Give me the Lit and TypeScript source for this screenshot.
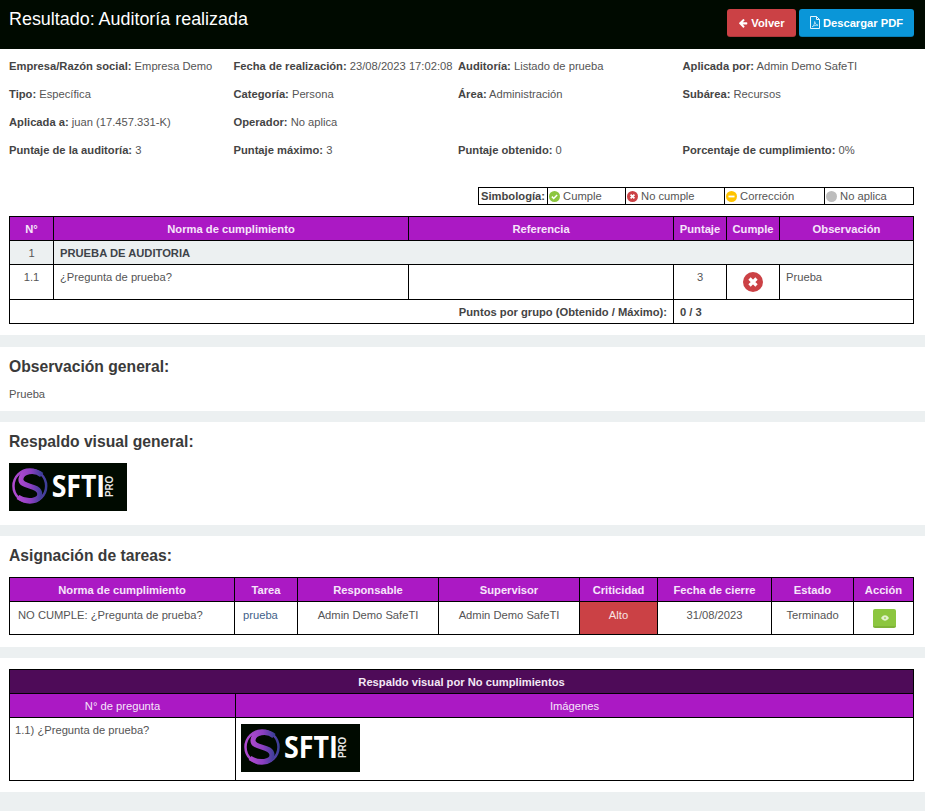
import { LitElement, html, css, svg } from "lit";
import { customElement } from "lit/decorators.js";

let logoId = 0;

@customElement("sfti-logo")
export class SftiLogo extends LitElement {
  static styles = css`
    :host {
      display: block;
      width: 119px;
      height: 48px;
    }
    :host(.first) {
      width: 118px;
    }
    svg {
      display: block;
      width: 100%;
      height: 100%;
    }
  `;

  private gid = `sfti-${logoId++}`;

  render() {
    return html`<svg viewBox="0 0 119 48" preserveAspectRatio="none">
      <defs>
        <linearGradient id=${this.gid} x1="0" y1="0" x2="1" y2="0">
          <stop offset="0" stop-color="#b04bd0" />
          <stop offset="0.55" stop-color="#8a3fc0" />
          <stop offset="1" stop-color="#3c3f98" />
        </linearGradient>
      </defs>
      <rect width="119" height="48" fill="#000a00" />
      <circle cx="21" cy="23" r="16.500" fill="none" stroke="url(#${this.gid})" stroke-width="2.500" />
      <path
        d="M33 12C26 6 13 8 12 16C11 25 31 21 31 31C31 38 18 40 9 34"
        fill="none"
        stroke="url(#${this.gid})"
        stroke-width="5"
      />
      <text x="43" y="34" font-family="Open Sans" font-weight="700" font-size="31" fill="#fff" textLength="54" lengthAdjust="spacingAndGlyphs">SFTI</text>
      <text transform="translate(105 34) rotate(-90)" font-family="Liberation Sans" font-weight="700" font-size="11" fill="#e8e8e8" textLength="21" lengthAdjust="spacingAndGlyphs">PRO</text>
    </svg>`;
  }
}

const statusIcon = (fill: string, mark: ReturnType<typeof svg>, size = 11) =>
  html`<svg class="status" width=${size} height=${size} viewBox="0 0 16 16">
    <circle cx="8" cy="8" r="8" fill=${fill} />
    ${mark}
  </svg>`;

const checkMark = svg`<path d="M4.200 8.200l2.600 2.600 5-5" fill="none" stroke="#fff" stroke-width="2.200" />`;
const crossMark = svg`<path d="M5.200 5.200l5.600 5.600M10.800 5.200l-5.600 5.600" fill="none" stroke="#fff" stroke-width="2.600" />`;
const minusMark = svg`<rect x="3.600" y="6.700" width="8.800" height="2.600" fill="#fff" />`;

const info: [string, string][] = [
  ["Empresa/Razón social:", "Empresa Demo"],
  ["Fecha de realización:", "23/08/2023 17:02:08"],
  ["Auditoría:", "Listado de prueba"],
  ["Aplicada por:", "Admin Demo SafeTI"],
  ["Tipo:", "Específica"],
  ["Categoría:", "Persona"],
  ["Área:", "Administración"],
  ["Subárea:", "Recursos"],
  ["Aplicada a:", "juan (17.457.331-K)"],
  ["Operador:", "No aplica"],
  ["", ""],
  ["", ""],
  ["Puntaje de la auditoría:", "3"],
  ["Puntaje máximo:", "3"],
  ["Puntaje obtenido:", "0"],
  ["Porcentaje de cumplimiento:", "0%"],
];

@customElement("app-root")
export class AppRoot extends LitElement {
  static styles = css`
    :host {
      display: block;
      min-height: 811px;
      background: #ecf0f1;
      font-family: "Liberation Sans", Arial, sans-serif;
      font-size: 11.200px;
      line-height: 16px;
      color: #555;
    }
    * {
      box-sizing: border-box;
    }
    header {
      display: flex;
      justify-content: space-between;
      height: 49px;
      padding: 9px 11px 0 9px;
      background: #000a00;
    }
    h1 {
      margin: 0;
      font-size: 17.920px;
      line-height: 20px;
      font-weight: 400;
      color: #fff;
    }
    .actions {
      display: flex;
      gap: 3px;
    }
    .btn {
      display: flex;
      align-items: center;
      justify-content: center;
      gap: 3px;
      height: 28px;
      border-radius: 3px;
      color: #fff;
      font-weight: 700;
      border-bottom: 1px solid rgba(0, 0, 0, 0.15);
    }
    .btn.back {
      width: 69px;
      background: #cb4145;
    }
    .btn.pdf {
      width: 115px;
      background: #0a96d8;
    }
    .section {
      background: #fff;
      padding: 0 11px 11px 9px;
      margin-bottom: 11px;
    }
    .section.top {
      padding-top: 3px;
      margin-bottom: 12px;
    }
    .info {
      display: grid;
      grid-template-columns: repeat(4, 224.500px);
      grid-auto-rows: 28px;
      align-items: center;
      margin-bottom: 23px;
    }
    b {
      color: #444;
    }
    .legend-row {
      display: flex;
      justify-content: flex-end;
      margin-bottom: 11px;
    }
    table {
      border-collapse: collapse;
      table-layout: fixed;
      background: #fff;
    }
    th,
    td {
      border: 1px solid #000;
      padding: 4px 6px 3px;
      height: 24px;
      vertical-align: top;
      overflow: hidden;
    }
    th {
      background: #ab19c4;
      color: #f6e6fa;
      font-weight: 700;
      text-align: center;
      padding: 4px 2px 3px;
    }
    .legend {
      width: 435px;
    }
    .legend td {
      height: 17px;
      padding: 1px 0 0 1px;
      vertical-align: middle;
      line-height: 15px;
      white-space: nowrap;
    }
    .legend td.name {
      padding-left: 2px;
    }
    .status {
      vertical-align: -2px;
    }
    .wide {
      width: 904px;
    }
    .c {
      text-align: center;
    }
    .r {
      text-align: right;
    }
    .group td {
      background: #ecf0f1;
    }
    .group b {
      color: #3d4349;
    }
    .row-q td {
      height: 35px;
    }
    .row-q .mark {
      padding: 7px 0 0;
      line-height: 0;
    }
    h2 {
      margin: 0;
      padding-top: 10px;
      height: 39px;
      font-size: 15.680px;
      line-height: 19px;
      font-weight: 700;
      color: #3a3a3a;
    }
    h2.tall {
      height: 41px;
    }
    .note {
      height: 14px;
      margin: 0;
    }
    .pad-visual {
      padding-bottom: 14px;
    }
    .tasks td {
      height: 33px;
      padding: 5px 8px 6px;
    }
    .tasks-section {
      padding-bottom: 12px;
    }
    .evidence-section {
      padding-top: 11px;
    }
    .tasks .alto {
      background: #cb4145;
      color: #f8e3e3;
    }
    .tasks .link {
      color: #3f5f8a;
    }
    .view {
      display: flex;
      align-items: center;
      justify-content: center;
      width: 23px;
      height: 19px;
      margin: 2px 0 0 11px;
      border-radius: 2px;
      background: #8cc63f;
      border-bottom: 2px solid #7fb338;
    }
    .evidence .title {
      background: #4e0b58;
      color: #f3e8f5;
    }
    .evidence .plain {
      font-weight: 400;
    }
    .evidence td {
      height: 63px;
      padding: 4px 5px;
    }
    .evidence .pic {
      padding-top: 6px;
    }
  `;

  private legend() {
    return html`<table class="legend">
      <colgroup>
        <col style="width:69px" />
        <col style="width:78px" />
        <col style="width:99px" />
        <col style="width:100px" />
        <col style="width:89px" />
      </colgroup>
      <tr>
        <td class="name"><b>Simbología:</b></td>
        <td>${statusIcon("#8cc63f", checkMark)} Cumple</td>
        <td>${statusIcon("#cb4145", crossMark)} No cumple</td>
        <td>${statusIcon("#ffc400", minusMark)} Corrección</td>
        <td>${statusIcon("#bdbdbd", svg``)} No aplica</td>
      </tr>
    </table>`;
  }

  private mainTable() {
    return html`<table class="wide">
      <colgroup>
        <col style="width:44px" />
        <col style="width:355px" />
        <col style="width:265px" />
        <col style="width:53px" />
        <col style="width:53px" />
        <col style="width:134px" />
      </colgroup>
      <tr>
        <th>N°</th>
        <th>Norma de cumplimiento</th>
        <th>Referencia</th>
        <th>Puntaje</th>
        <th>Cumple</th>
        <th>Observación</th>
      </tr>
      <tr class="group">
        <td class="c">1</td>
        <td colspan="5"><b>PRUEBA DE AUDITORIA</b></td>
      </tr>
      <tr class="row-q">
        <td class="c">1.1</td>
        <td>¿Pregunta de prueba?</td>
        <td></td>
        <td class="c">3</td>
        <td class="c mark">${statusIcon("#cb4145", crossMark, 20)}</td>
        <td>Prueba</td>
      </tr>
      <tr>
        <td class="r" colspan="3"><b>Puntos por grupo (Obtenido / Máximo):</b></td>
        <td colspan="3"><b>0 / 3</b></td>
      </tr>
    </table>`;
  }

  private tasksTable() {
    return html`<table class="wide tasks">
      <colgroup>
        <col style="width:225px" />
        <col style="width:63px" />
        <col style="width:141px" />
        <col style="width:141px" />
        <col style="width:78px" />
        <col style="width:114px" />
        <col style="width:82px" />
        <col style="width:60px" />
      </colgroup>
      <tr>
        <th>Norma de cumplimiento</th>
        <th>Tarea</th>
        <th>Responsable</th>
        <th>Supervisor</th>
        <th>Criticidad</th>
        <th>Fecha de cierre</th>
        <th>Estado</th>
        <th>Acción</th>
      </tr>
      <tr>
        <td>NO CUMPLE: ¿Pregunta de prueba?</td>
        <td class="link">prueba</td>
        <td class="c">Admin Demo SafeTI</td>
        <td class="c">Admin Demo SafeTI</td>
        <td class="c alto">Alto</td>
        <td class="c">31/08/2023</td>
        <td class="c">Terminado</td>
        <td>
          <div class="view">
            <svg width="8" height="6" viewBox="0 0 18 12">
              <path d="M0 6C3 1.500 6 0 9 0s6 1.500 9 6c-3 4.500-6 6-9 6S3 10.500 0 6z" fill="#e3f2cf" />
              <circle cx="9" cy="6" r="2.500" fill="#a5d36a" />
            </svg>
          </div>
        </td>
      </tr>
    </table>`;
  }

  private evidenceTable() {
    return html`<table class="wide evidence">
      <colgroup>
        <col style="width:226px" />
        <col style="width:678px" />
      </colgroup>
      <tr><th class="title" colspan="2">Respaldo visual por No cumplimientos</th></tr>
      <tr>
        <th class="plain">N° de pregunta</th>
        <th class="plain">Imágenes</th>
      </tr>
      <tr>
        <td>1.1) ¿Pregunta de prueba?</td>
        <td class="pic"><sfti-logo></sfti-logo></td>
      </tr>
    </table>`;
  }

  render() {
    return html`
      <header>
        <h1>Resultado: Auditoría realizada</h1>
        <div class="actions">
          <div class="btn back">
            <svg width="10" height="10" viewBox="0 0 1792 1792">
              <path
                fill="#fff"
                d="M1664 896v128q0 53-32.500 90.500t-84.500 37.500h-704l293 294q38 36 38 90t-38 90l-75 76q-37 37-90 37-52 0-91-37l-651-652q-37-37-37-90 0-52 37-91l651-650q38-38 91-38 52 0 90 38l75 74q38 38 38 91t-38 91l-293 293h704q52 0 84.500 37.500t32.500 90.500z"
              />
            </svg>
            Volver
          </div>
          <div class="btn pdf">
            <svg width="10" height="13" viewBox="0 0 10 13">
              <path d="M.500.500h6l3 3v9h-9z M6.500.500v3h3" fill="none" stroke="#e6f5fc" stroke-width="1" />
              <path d="M2.200 10.800C4 9.500 5 7 4.700 5.500 5 7.500 6 9 8 9.200 6 9 4 9.500 2.200 10.800z" fill="none" stroke="#e6f5fc" stroke-width=".7" />
            </svg>
            Descargar PDF
          </div>
        </div>
      </header>

      <section class="section top">
        <div class="info">
          ${info.map(([k, v]) => html`<div>${k ? html`<b>${k}</b> ${v}` : ""}</div>`)}
        </div>
        <div class="legend-row">${this.legend()}</div>
        ${this.mainTable()}
      </section>

      <section class="section">
        <h2>Observación general:</h2>
        <p class="note">Prueba</p>
      </section>

      <section class="section pad-visual">
        <h2 class="tall">Respaldo visual general:</h2>
        <sfti-logo class="first"></sfti-logo>
      </section>

      <section class="section tasks-section">
        <h2 class="tall">Asignación de tareas:</h2>
        ${this.tasksTable()}
      </section>

      <section class="section evidence-section">${this.evidenceTable()}</section>
    `;
  }
}

declare global {
  interface HTMLElementTagNameMap {
    "app-root": AppRoot;
    "sfti-logo": SftiLogo;
  }
}
